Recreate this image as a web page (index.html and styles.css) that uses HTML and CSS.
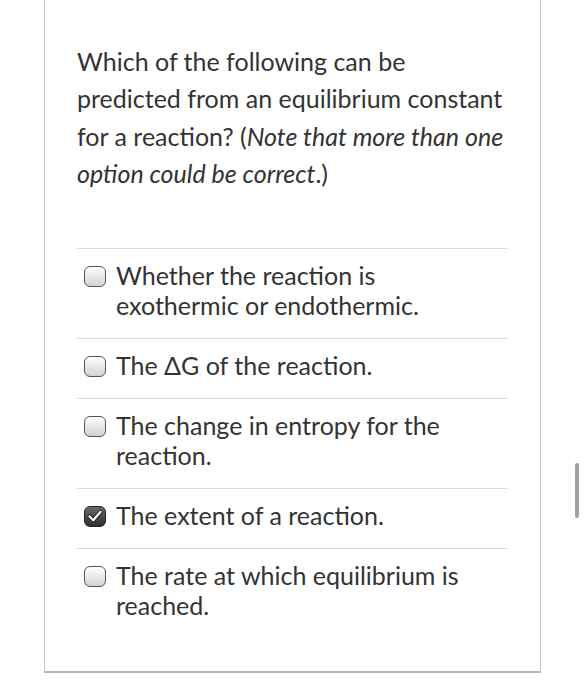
FILE: index.html
```html
<!DOCTYPE html>
<html>
<head>
<meta charset="utf-8">
<link rel="stylesheet" href="styles.css">
</head>
<body>
<div class="page">
  <div class="card">
    <p class="question">Which of the following can be predicted from an equilibrium constant for a reaction? (<em>Note that more than one option could be correct</em>.)</p>
    <ul class="answers">
      <li class="answer"><span class="box"></span><span class="label">Whether the reaction is exothermic or endothermic.</span></li>
      <li class="answer"><span class="box"></span><span class="label">The ΔG of the reaction.</span></li>
      <li class="answer"><span class="box"></span><span class="label">The change in entropy for the reaction.</span></li>
      <li class="answer"><span class="box checked"><svg viewBox="0 0 20 20" width="20" height="20"><path d="M4.5 10.5 L8.3 14.3 L15.5 5.8" fill="none" stroke="#222" stroke-width="4.2" stroke-linecap="round" stroke-linejoin="round"/><path d="M4.5 10.5 L8.3 14.3 L15.5 5.8" fill="none" stroke="#fff" stroke-width="2.2" stroke-linecap="round" stroke-linejoin="round"/></svg></span><span class="label">The extent of a reaction.</span></li>
      <li class="answer"><span class="box"></span><span class="label">The rate at which equilibrium is reached.</span></li>
    </ul>
  </div>
  <div class="scrollbar"></div>
</div>
</body>
</html>
```
FILE: styles.css
```css
html, body {
  margin: 0;
  padding: 0;
  background: #fff;
}
.page {
  position: relative;
  width: 585px;
  height: 700px;
  overflow: hidden;
  font-family: Lato, "Open Sans", sans-serif;
  color: #333;
}
.card {
  box-sizing: border-box;
  margin-left: 44px;
  width: 497px;
  height: 673px;
  border: 1px solid #c4c4c4;
  border-top: none;
  border-bottom: 2px solid #b8b8b8;
  padding: 43px 32px 0 32px;
}
.question {
  margin: 0;
  font-size: 25px;
  line-height: 37.4px;
}
.question em {
  font-style: italic;
}
.answers {
  list-style: none;
  margin: 55px 0 0 0;
  padding: 0;
}
.answer {
  display: flex;
  align-items: flex-start;
  gap: 10px;
  border-top: 1px solid #dcdcdc;
  padding: 11px 0 18px 7px;
  font-size: 25px;
  line-height: 30px;
}
.box {
  flex: none;
  box-sizing: border-box;
  width: 22px;
  height: 21px;
  margin-top: 6px;
  border: 1.5px solid #555;
  border-radius: 6px;
  background: linear-gradient(#ffffff, #d2d2d2);
  display: flex;
  align-items: center;
  justify-content: center;
}
.box.checked {
  background: linear-gradient(#6a6a6a, #2e2e2e);
  border-color: #222;
}
.label {
  flex: none;
  width: 362px;
}
.scrollbar {
  position: absolute;
  left: 575px;
  top: 463px;
  width: 4px;
  height: 55px;
  border-radius: 2px;
  background: #a0a0a0;
}
```
